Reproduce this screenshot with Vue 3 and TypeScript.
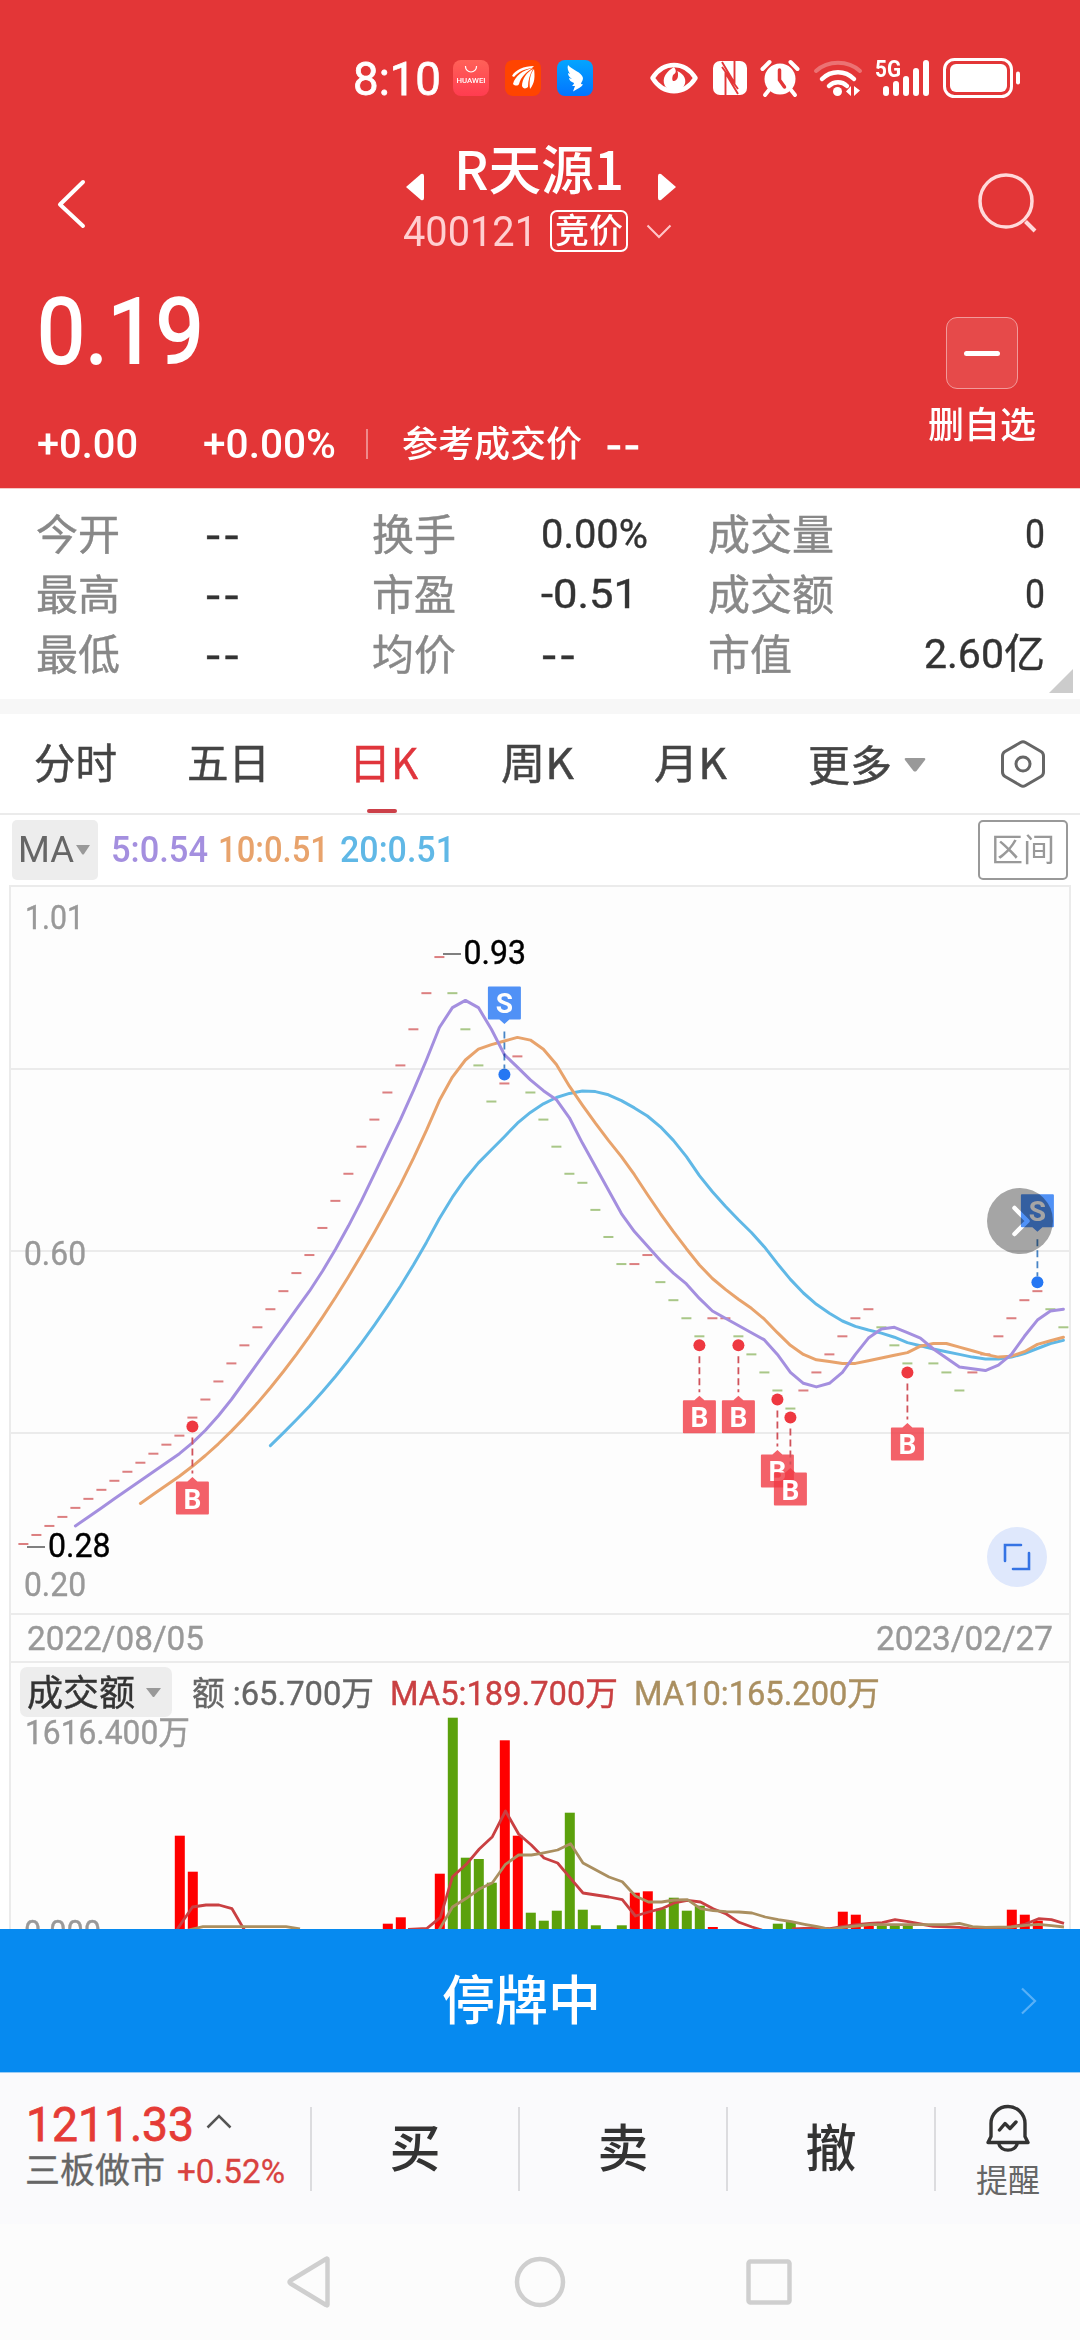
<script setup lang="ts">
import type { Directive } from 'vue'

// Condenses or widens a run of text horizontally so it occupies the given width.
const vFit: Directive<HTMLElement, number> = {
  mounted(el, binding) {
    const natural = el.getBoundingClientRect().width
    if (!natural) return
    el.style.transform = `scaleX(${binding.value / natural})`
    el.style.marginRight = `${binding.value - natural}px`
  },
}

interface Stat { label: string; value: string; width: number }

const stats: Stat[][] = [
  [
    { label: '今开', value: '--', width: 37 },
    { label: '换手', value: '0.00%', width: 107 },
    { label: '成交量', value: '0', width: 20 },
  ],
  [
    { label: '最高', value: '--', width: 37 },
    { label: '市盈', value: '-0.51', width: 97 },
    { label: '成交额', value: '0', width: 20 },
  ],
  [
    { label: '最低', value: '--', width: 37 },
    { label: '均价', value: '--', width: 37 },
    { label: '市值', value: '2.60亿', width: 121 },
  ],
]

const tabs = [
  { label: '分时', w: 83 },
  { label: '五日', w: 83 },
  { label: '日K', w: 69, active: true },
  { label: '周K', w: 73 },
  { label: '月K', w: 73 },
]

const closes = [
  28, 29, 30, 31, 32, 33, 34, 35, 36, 37, 38, 39, 40, 42, 44, 46, 48, 50, 52, 54,
  56, 58, 60, 63, 66, 69, 72, 75, 78, 81, 85, 89, 93, 89, 85, 81, 77, 79, 82, 78,
  75, 72, 69, 68, 65, 62, 59, 59, 60, 57, 55, 53, 51, 53, 53, 51, 49, 47, 45, 43,
  45, 47, 49, 51, 53, 54, 52, 50, 48, 50, 48, 47, 45, 47, 49, 51, 53, 55, 56, 54, 52,
]

const xAt = (i: number) => 23.4 + i * 13
const yAt = (cents: number) => 1544 - (cents - 28) * 9.03

const candles = closes.map((c, i) => ({
  x: xAt(i) - 5,
  y: yAt(c) - 1,
  up: i === 0 || c > closes[i - 1] || i === 47 || i === 54,
}))

function average(period: number): string {
  const points: string[] = []
  for (let i = period - 1; i < closes.length; i++) {
    let sum = 0
    for (let j = i - period + 1; j <= i; j++) sum += closes[j]
    points.push(`${xAt(i).toFixed(1)},${yAt(sum / period).toFixed(1)}`)
  }
  return points.join(' ')
}

const averages = [
  { color: '#60b8e6', points: average(20) },
  { color: '#e8a36c', points: average(10) },
  { color: '#a48fdf', points: average(5) },
]

const buys = [13, 52, 55, 58, 59, 68].map((i) => ({ x: xAt(i), y: yAt(closes[i]) }))
const sells = [37, 78].map((i) => ({ x: xAt(i), y: yAt(closes[i]) }))

// [index, top, rising]
const volumes: [number, number, number][] = [
  [12, 1835.7, 1], [13, 1871.7, 1], [28, 1923.7, 1], [29, 1917.3, 1], [32, 1873.7, 1],
  [33, 1717.7, 0], [34, 1857.7, 0], [35, 1859, 0], [36, 1882.7, 0], [37, 1740.3, 1],
  [38, 1835.7, 1], [39, 1912.7, 0], [40, 1920.7, 0], [41, 1910.7, 0], [42, 1812.7, 0],
  [43, 1909.7, 0], [44, 1925.3, 0], [46, 1925.3, 0], [47, 1892.7, 1], [48, 1891.3, 1],
  [49, 1908.7, 0], [50, 1897.7, 0], [51, 1910.7, 0], [52, 1905.7, 0], [53, 1927, 1],
  [58, 1923.7, 0], [59, 1921.7, 0], [63, 1911.7, 1], [64, 1914.7, 1], [65, 1926, 1],
  [66, 1924.7, 0], [67, 1926, 0], [68, 1926, 0], [76, 1909.7, 1], [77, 1914.7, 1], [78, 1920.7, 1],
]

const volumeMa5 = [
  '176,1931 192.5,1907 206,1905 219,1905 232,1908.7 245,1931',
  '408,1929.5 427,1928.3 440.4,1917.3 452.5,1876.7 466.3,1864.3 479.3,1849 492.4,1836.7 505.5,1811 518.6,1834 531.3,1845 544,1858 557.6,1863 570.6,1878.3 583,1893 596,1895 609,1897 622.3,1899.7 635.4,1916 648.5,1912 661.6,1908.7 674.3,1903 687.4,1900.3 700.5,1902 713.2,1908.7 726.3,1914 739,1922.3 752,1927 762,1930',
  '792,1929 816,1928 830,1928.6 843.4,1926.3 856.5,1924.7 869.5,1923.3 882.3,1922.7 895,1919.7 908,1921.7 920.5,1924 933.3,1926.3 959.4,1927.3 971,1929 998,1928.6 1011.4,1926.7 1025.5,1924 1038.6,1918.7 1051.4,1919.7 1064,1923.3',
]
const volumeMa10 = [
  '188,1930 203,1926.7 286,1926.7 300,1929',
  '439,1930 452.5,1907 466.3,1898.3 479.3,1889 492.4,1882.7 505.5,1864.3 518.6,1855 531.3,1855 540,1853.6 557.6,1850 570.6,1843.7 583,1863 596,1870 609,1877 622.3,1881.7 635.4,1896 648.5,1902 661.6,1902 674.3,1900 687.4,1899.7 700.5,1908.7 713.2,1910.7 726.3,1911.7 739,1912 752,1913 765.2,1917 778.3,1919.7 791.4,1921.7 804.5,1924.3 817.5,1926.7 830,1929.4 843.4,1927.3 856.5,1926 869.5,1924.7 946,1924.7 959.4,1923.3 972.5,1926.7 985.6,1927.3 1011.4,1927 1025.5,1925.3 1038.6,1924.3 1051.4,1925.7 1064,1927',
]

const actions = ['买', '卖', '撤']
</script>

<template>
  <div class="screen">
    <header class="hero">
      <div class="status">
        <span class="clock"><span v-fit="88" class="fit">8:10</span></span>
        <svg class="apps" width="142" height="38" viewBox="452 59 142 38">
          <defs>
            <linearGradient id="gh" x1="0" y1="0" x2="0" y2="1">
              <stop offset="0" stop-color="#ff6158" /><stop offset="1" stop-color="#ff3c50" />
            </linearGradient>
            <linearGradient id="gb" x1="0" y1="0" x2="0" y2="1">
              <stop offset="0" stop-color="#03a5ff" /><stop offset="1" stop-color="#0274ff" />
            </linearGradient>
          </defs>
          <rect x="453" y="60" width="36" height="36" rx="8" fill="url(#gh)" />
          <path d="M465.500 66v.5a5.500 5.500 0 0 0 11 0v-.5" fill="none" stroke="#fff" stroke-width="1.200" />
          <text x="456.500" y="83" font-size="7.500" font-weight="500" fill="#fff" textLength="29" lengthAdjust="spacingAndGlyphs">HUAWEI</text>
          <rect x="505" y="60" width="36" height="36" rx="8" fill="#ff4400" />
          <path d="M512 76c3-6 12-10 22-10l-2 2c-8 1-14 4-18 9zM513 84c2-8 10-14 20-16c-7 4-12 9-14 16c-1 2-4 2-6 0zM522 86c0-7 5-14 11-17c-3 5-5 11-5 18c-2 2-5 2-6-1zM530 89c-1-8 0-15 4-20c1 7 1 14-4 20z" fill="#fff" />
          <rect x="557" y="60" width="36" height="36" rx="8" fill="url(#gb)" />
          <path d="M568 65c4 5 14 7 15 13c0 3-2 4-2 6l2 .5c-2 3-5 4-10 7l2-5.500h-3c1-1 2-2 2-3c-3-1-5-3-5-5l3 1c-3-2-4-4-4-6l2 1c-2-3-3-6-2-9z" fill="#fff" />
        </svg>
        <svg class="sys" width="376" height="44" viewBox="648 56 376 44" fill="none" stroke="#fff">
          <path d="M652.500 78c11-17.500 32-17.500 43 0c-11 17.500-32 17.500-43 0z" stroke-width="4.500" stroke-linejoin="round" />
          <path d="M674 67c3 4 2 6-1 8c-1 3-1 5 0 6c3 0 5-2 5-6c0-2 0-3-1-4c8 3 10 10 7 15c-4 6-15 6-19 0c-4-8 2-15 9-19z" fill="#fff" stroke="none" />
          <rect x="713" y="61" width="34" height="34" rx="7" fill="#fff" stroke="none" />
          <path d="M725.500 95V73L738 94M734.500 61V83L722 62M722 67L738 89" stroke="#e33637" stroke-width="1.900" />
          <circle cx="780" cy="79" r="15.500" fill="#fff" stroke="none" />
          <path d="M762.500 69l7-7M797.500 69l-7-7" stroke-width="4" stroke-linecap="round" />
          <path d="M769 90l-4 5M791 90l4 5" stroke-width="4" stroke-linecap="round" />
          <path d="M779.500 70v10l5 7" stroke="#e33637" stroke-width="3.500" stroke-linecap="round" />
          <path d="M816 71c12-11 32-11 44 0" stroke-width="4" stroke-linecap="round" opacity=".3" />
          <path d="M822 79c9-9 23-9 32 0M829 86c5-5 13-5 18 0" stroke-width="4.500" stroke-linecap="round" />
          <circle cx="837.500" cy="91.500" r="4.500" fill="#fff" stroke="none" />
          <path d="M846 91.500l5-5.500v10M854 86v10l6-5.500z" fill="#fff" stroke="none" />
          <text x="875" y="77" font-size="24" font-weight="700" fill="#fff" stroke="none" textLength="26" lengthAdjust="spacingAndGlyphs">5G</text>
          <path d="M886 89v4M896 84v9M906 79v14M916 71v22M926 63v30" stroke-width="6" stroke-linecap="round" />
          <rect x="944.500" y="59.500" width="67" height="37" rx="10" stroke-width="3" />
          <rect x="950" y="64" width="57" height="28" rx="6" fill="#fff" stroke="none" />
          <path d="M1018 73.500v9" stroke-width="4" stroke-linecap="round" />
        </svg>
      </div>

      <div class="nav">
        <svg class="back" width="32" height="54" viewBox="56 177 32 54"><path d="M83 182L60 204.500L83 226" fill="none" stroke="#fff" stroke-width="4" stroke-linecap="round" stroke-linejoin="round" /></svg>
        <div class="title-block">
          <div class="title-row">
            <svg width="20" height="28" viewBox="0 0 20 28"><path d="M1 14L16 1q3-1 3 2v22q0 3-3 2z" fill="#fff" /></svg>
            <h1><span v-fit="170" class="fit">R天源1</span></h1>
            <svg width="20" height="28" viewBox="0 0 20 28"><path d="M19 14L4 1q-3-1-3 2v22q0 3 3 2z" fill="#fff" /></svg>
          </div>
          <div class="code-row">
            <span class="code"><span v-fit="134" class="fit">400121</span></span>
            <span class="badge">竞价</span>
            <svg width="26" height="15" viewBox="0 0 26 15"><path d="M1.500 1.500L13 13L24.500 1.500" fill="none" stroke="#ffc6c8" stroke-width="2" /></svg>
          </div>
        </div>
        <svg class="search" width="62" height="62" viewBox="975 171 62 62" fill="none" stroke="#ffd9da" stroke-width="3.500">
          <circle cx="1005" cy="201" r="26" /><path d="M1024.500 221.500L1034 231" stroke-width="4" />
        </svg>
      </div>

      <div class="quote">
        <div class="quote-main">
          <div class="price"><span v-fit="167" class="fit">0.19</span></div>
          <div class="change">
            <span v-fit="101" class="fit">+0.00</span>
            <span v-fit="133" class="fit pct">+0.00%</span>
            <i class="rule"></i>
            <span class="ref">参考成交价</span>
            <span v-fit="36" class="fit dash hyphens">--</span>
          </div>
        </div>
        <div class="remove">
          <span class="minus"><i></i></span>
          <span class="remove-label">删自选</span>
        </div>
      </div>
    </header>

    <section class="stats">
      <div v-for="(row, r) in stats" :key="r" class="stat-row">
        <div v-for="s in row" :key="s.label" class="stat">
          <span class="stat-label">{{ s.label }}</span>
          <span class="stat-value"><span v-fit="s.width" class="fit" :class="{ hyphens: s.value === '--' }">{{ s.value }}</span></span>
        </div>
      </div>
      <i class="corner"></i>
    </section>

    <nav class="tabs">
      <span v-for="t in tabs" :key="t.label" class="tab" :class="{ active: t.active }"><span v-fit="t.w" class="fit">{{ t.label }}</span></span>
      <span class="tab more">更多<svg width="22" height="14" viewBox="0 0 22 14"><path d="M2 0h18q2 0 1 2L12.500 13q-1.500 1-3 0L1 2q-1-2 1-2z" fill="#999" /></svg></span>
      <svg class="gear" width="46" height="50" viewBox="0 0 46 50" fill="none" stroke="#666" stroke-width="3">
        <path d="M20.500 3.500q2.500-1.500 5 0l15.500 9q2.500 1.500 2.500 4.500v16q0 3-2.500 4.500l-15.500 9q-2.500 1.500-5 0l-15.500-9q-2.500-1.500-2.500-4.500v-16q0-3 2.500-4.500z" /><circle cx="23" cy="25" r="7" />
      </svg>
    </nav>

    <div class="indicator">
      <span class="chip"><span v-fit="56" class="fit">MA</span><svg width="14" height="10" viewBox="0 0 14 10"><path d="M0 0h14L8 9q-1 1-2 0z" fill="#999" /></svg></span>
      <span v-fit="97" class="fit ma ma5">5:0.54</span>
      <span v-fit="111" class="fit ma ma10">10:0.51</span>
      <span v-fit="115" class="fit ma ma20">20:0.51</span>
      <span class="range">区间</span>
    </div>

    <main class="frame">
      <svg class="kline" width="1058" height="728" viewBox="11 887 1058 728">
        <path d="M11 1069H1069M11 1251H1069M11 1433H1069M11 1614H1069" stroke="#ebebeb" stroke-width="2" />
        <g class="axis" font-size="33">
          <text x="25" y="929" textLength="59" lengthAdjust="spacingAndGlyphs">1.01</text>
          <text x="24" y="1265" textLength="62" lengthAdjust="spacingAndGlyphs">0.60</text>
          <text x="24" y="1596" textLength="62" lengthAdjust="spacingAndGlyphs">0.20</text>
        </g>
        <rect v-for="(c, i) in candles" :key="i" :x="c.x" :y="c.y" width="10" height="2" :fill="c.up ? '#dc7f80' : '#a9c788'" />
        <polyline v-for="a in averages" :key="a.color" :points="a.points" fill="none" :stroke="a.color" stroke-width="3" stroke-linejoin="round" stroke-linecap="round" />
        <path d="M443 954h18M27 1547h18" stroke="#808080" stroke-width="2" />
        <g font-size="33" fill="#000" stroke="#000" stroke-width=".4">
          <text x="463.500" y="964" textLength="62.500" lengthAdjust="spacingAndGlyphs">0.93</text>
          <text x="48" y="1557" textLength="62.500" lengthAdjust="spacingAndGlyphs">0.28</text>
        </g>
        <circle cx="1020" cy="1221" r="33" fill="#000" fill-opacity=".35" />
        <path d="M1014.500 1208l13 13l-13 13" fill="none" stroke="#fff" stroke-width="4.500" stroke-linecap="round" stroke-linejoin="round" />
        <g v-for="b in buys" :key="b.x" :transform="`translate(${b.x} ${b.y})`">
          <circle cy="9" r="6" fill="#ee3840" />
          <path d="M0 20V56" stroke="#d0525a" stroke-width="1.800" stroke-dasharray="7 4" />
          <path d="M-16.500 65q0-1 1-1h10.500L0 59.500L5 64h10.500q1 0 1 1v31q0 1-1 1h-31q-1 0-1-1z" fill="#f03943" fill-opacity=".8" />
          <text y="91" text-anchor="middle" font-size="28" font-weight="700" fill="#fff">B</text>
        </g>
        <g v-for="s in sells" :key="s.x" class="sell" :transform="`translate(${s.x} ${s.y})`">
          <circle cy="-9" r="6" fill="#2578f5" />
          <path d="M0 -52V-15" stroke="#4886c8" stroke-width="1.800" stroke-dasharray="7 4" />
          <path d="M-16.500 -96q0-1 1-1h31q1 0 1 1v31q0 1-1 1h-10.500L0 -59.500L-5 -64h-10.500q-1 0-1-1z" fill="#5092f8" />
          <text y="-70" text-anchor="middle" font-size="28" font-weight="700" fill="#fff">S</text>
        </g>
        <circle cx="1017" cy="1557" r="30" fill="#dfe8fc" />
        <path d="M1005 1561V1545H1021M1029 1553V1569H1013" fill="none" stroke="#3573e4" stroke-width="2.600" stroke-linecap="round" />
      </svg>

      <div class="dates">
        <span v-fit="177" class="fit">2022/08/05</span>
        <span class="end"><span v-fit="177" class="fit">2023/02/27</span></span>
      </div>

      <div class="turnover">
        <span class="vchip">成交额<svg width="15" height="9" viewBox="0 0 15 9"><path d="M0 0h15L8.500 8.500q-1 1-2 0z" fill="#999" /></svg></span>
        <span v-fit="182" class="fit amount">额 :65.700万</span>
        <span v-fit="228" class="fit v5">MA5:189.700万</span>
        <span v-fit="246" class="fit v10">MA10:165.200万</span>
      </div>

      <svg class="volume" width="1058" height="222" viewBox="11 1707 1058 222">
        <g class="axis" font-size="33">
          <text x="25" y="1744" textLength="165" lengthAdjust="spacingAndGlyphs">1616.400万</text>
          <text x="24" y="1944" textLength="77" lengthAdjust="spacingAndGlyphs">0.000</text>
        </g>
        <rect v-for="v in volumes" :key="v[0]" :x="xAt(v[0]) - 4.6" :y="v[1]" width="10" :height="1949 - v[1]" :fill="v[2] ? '#ff0000' : '#5ba10c'" />
        <polyline v-for="p in volumeMa5" :key="p" :points="p" fill="none" stroke="#c94042" stroke-width="2.800" stroke-linejoin="round" />
        <polyline v-for="p in volumeMa10" :key="p" :points="p" fill="none" stroke="#aa8f60" stroke-width="2.800" stroke-linejoin="round" />
      </svg>
    </main>

    <div class="halt">
      <span class="halt-text">停牌中</span>
      <svg width="18" height="28" viewBox="0 0 18 28"><path d="M2 1.500L15 14L2 26.500" fill="none" stroke="#58b0f7" stroke-width="2.200" /></svg>
    </div>

    <footer class="trade">
      <div class="index">
        <div class="index-top">
          <span v-fit="168" class="fit">1211.33</span>
          <svg width="26" height="15" viewBox="0 0 26 15"><path d="M1.500 13.500L13 2L24.500 13.500" fill="none" stroke="#555" stroke-width="2.500" /></svg>
        </div>
        <div class="index-sub"><span class="index-name">三板做市</span><span v-fit="108" class="fit index-pct">+0.52%</span></div>
      </div>
      <div v-for="a in actions" :key="a" class="action">{{ a }}</div>
      <div class="remind">
        <svg width="46" height="50" viewBox="984 2104 46 50" fill="none" stroke="#333" stroke-width="3.400" stroke-linejoin="round" stroke-linecap="round">
          <path d="M987 2142.500l3-6v-13a17 17 0 0 1 34 0v13l3 6zM997.500 2143c2 9.500 17 9.500 19 0" />
          <path d="M998.500 2130l5.500-6.500l5 5l6-6.500" />
        </svg>
        <span>提醒</span>
      </div>
    </footer>

    <div class="system-nav">
      <svg width="1080" height="116" viewBox="0 2224 1080 116" fill="none" stroke="#cfcfcf" stroke-width="4.500" stroke-linejoin="round">
        <path d="M327.500 2259.500V2304.500Q327.500 2306 326 2305L290.500 2283.500Q288.500 2282 290.500 2280.500L326 2259Q327.500 2258 327.500 2259.500z" />
        <circle cx="540" cy="2282" r="23" />
        <rect x="748.500" y="2261.500" width="41" height="41" rx="2" />
      </svg>
    </div>
  </div>
</template>

<style>
body { margin: 0; background: #fcfcfc; }
</style>

<style scoped>
.screen {
  width: 1080px;
  height: 2340px;
  overflow: hidden;
  display: flex;
  flex-direction: column;
  background: #fff;
  font-family: Roboto, "Noto Sans CJK SC", sans-serif;
  color: #333;
}
svg { display: block; flex: none; }
.fit { display: inline-block; white-space: nowrap; transform-origin: 0 50%; flex: none; }
.hyphens { font-family: "Liberation Sans", sans-serif; letter-spacing: 2px; }

.hero { height: 489px; flex: none; background: #e33637; color: #fff; border-bottom: 1px solid #f6c9c6; box-sizing: border-box; }
.status { display: flex; height: 120px; padding-left: 353px; }
.clock { font-size: 47px; font-weight: 400; line-height: 157px; width: 99px; -webkit-text-stroke: .8px #fff; }
.apps { margin-top: 59px; }
.sys { margin: 56px 0 0 54px; }

.nav { display: flex; height: 150px; }
.back { margin: 57px 0 0 56px; }
.title-block { margin-left: 315px; width: 280px; }
.title-row { display: flex; height: 86px; padding-left: 2px; }
.title-row svg { margin-top: 53px; }
h1 { margin: 0; width: 232px; padding-left: 29px; box-sizing: border-box; font-size: 53px; font-weight: 400; line-height: 94px; font-family: "Noto Sans CJK SC", sans-serif; }
h1 .fit { font-weight: 500; }
.code-row { display: flex; height: 50px; align-items: center; }
.code { width: 147px; font-size: 42px; color: #ffcfd1; }
.badge { width: 74px; height: 38px; line-height: 33px; border: 2px solid #fff; border-radius: 7px; text-align: center; font-family: "Noto Sans CJK SC", sans-serif; font-size: 34px; font-weight: 500; }
.code-row svg { margin-left: 18px; }
.search { margin: 51px 0 0 293px; }

.quote { display: flex; justify-content: space-between; height: 217px; }
.quote-main { padding-left: 37px; }
.price { font-size: 91px; line-height: 125px; -webkit-text-stroke: 2px #fff; }
.change { display: flex; align-items: center; height: 90px; margin-top: 4px; font-size: 41px; font-weight: 500; }
.pct { margin-left: 65px; }
.rule { width: 2px; height: 30px; margin-left: 30px; background: #ef8a8b; }
.ref { margin: -6px 0 0 34px; font-family: "Noto Sans CJK SC", sans-serif; font-size: 36px; font-weight: 500; }
.dash { margin-left: 24px; -webkit-text-stroke: 1px #fff; }
.remove { width: 110px; padding: 47px 43px 0 0; display: flex; flex-direction: column; align-items: center; }
.minus { display: flex; align-items: center; justify-content: center; width: 70px; height: 70px; border: 1px solid #f19a9a; border-radius: 11px; background: #e64a4a; }
.minus i { width: 36px; height: 5px; border-radius: 3px; background: #fff; }
.remove-label { margin-top: 8px; font-family: "Noto Sans CJK SC", sans-serif; font-size: 36px; line-height: 50px; font-weight: 500; }

.stats { position: relative; height: 196px; flex: none; padding-top: 14px; border-bottom: 15px solid #f7f7f7; }
.stat-row { display: flex; height: 60px; padding-left: 36px; }
.stat { display: flex; width: 336px; line-height: 63px; }
.stat:last-child { width: 337px; justify-content: space-between; }
.stat-label { width: 169px; font-family: "Noto Sans CJK SC", sans-serif; font-size: 42px; line-height: 57px; color: #888; -webkit-text-stroke: .4px #888; }
.stat:last-child .stat-label { width: auto; }
.stat-value { font-size: 41px; color: #333; -webkit-text-stroke: .4px #333; }
.corner { position: absolute; right: 7px; bottom: 6px; border-left: 24px solid transparent; border-bottom: 24px solid #ccc; }

.tabs { display: flex; height: 99px; flex: none; border-bottom: 2px solid #ebebeb; font-family: "Noto Sans CJK SC", sans-serif; font-size: 42px; line-height: 93px; color: #444; padding-left: 34px; -webkit-text-stroke: .5px; }
.tab { width: 153px; position: relative; box-sizing: border-box; }
.tab.active { width: 161px; padding-left: 9px; color: #e0353c; }
.tab.active::after { content: ""; position: absolute; left: 27px; bottom: 0; width: 30px; height: 4px; background: #cc4049; border-radius: 2px; }
.tab.more { display: flex; align-items: center; width: 150px; line-height: 91px; padding: 0 0 3px 1px; }
.more svg { margin: 5px 0 0 12px; }
.gear { margin: 25px 34px 0 auto; }

.indicator { display: flex; align-items: center; height: 70px; flex: none; padding: 0 12px; font-size: 36px; }
.chip { display: flex; align-items: center; width: 86px; height: 60px; border-radius: 5px; background: #ededed; color: #666; margin-right: 13px; padding-left: 6px; box-sizing: border-box; }
.chip svg { margin-left: 2px; }
.ma { font-weight: 500; }
.ma5 { color: #a48fdf; }
.ma10 { margin-left: 10px; color: #e8a36c; }
.ma20 { margin-left: 11px; color: #60b8e6; }
.range { margin-left: auto; width: 86px; height: 56px; line-height: 51px; text-align: center; border: 2px solid #999; border-radius: 5px; color: #999; font-family: "Noto Sans CJK SC", sans-serif; font-size: 32px; }

.frame { width: 1058px; margin: 0 9px; flex: none; border: 2px solid #ebebeb; border-bottom: 0; background: #fdfdfd; height: 1042px; overflow: hidden; }
.axis { fill: #999; stroke: #999; stroke-width: .4px; }
.sell { mix-blend-mode: multiply; }
.dates { display: flex; justify-content: space-between; height: 46px; line-height: 47px; padding: 0 16px; font-size: 33px; color: #999; border-bottom: 2px solid #ebebeb; -webkit-text-stroke: .4px #999; }
.turnover { display: flex; height: 54px; font-size: 33px; line-height: 61px; padding-left: 9px; -webkit-text-stroke: .4px; }
.vchip { display: flex; align-items: center; width: 152px; height: 50px; margin-top: 4px; border-radius: 7px; background: #ededed; padding-left: 7px; box-sizing: border-box; font-family: "Noto Sans CJK SC", sans-serif; font-size: 36px; line-height: 46px; padding-bottom: 4px; }
.vchip svg { margin: 4px 0 0 11px; }
.amount { margin-left: 20px; color: #666; }
.v5 { margin-left: 16px; color: #c94042; }
.v10 { margin-left: 16px; color: #aa8f60; }
.volume { margin-top: -10px; }

.halt { display: flex; align-items: center; height: 144px; flex: none; background: #068af0; color: #fff; border-bottom: 1px solid #9ccdf5; box-sizing: border-box; padding-left: 442px; }
.halt-text { font-family: "Noto Sans CJK SC", sans-serif; font-size: 53px; font-weight: 500; line-height: 134px; flex: 1; padding-bottom: 8px; }
.halt svg { margin-right: 42px; }

.trade { display: flex; align-items: center; height: 151px; flex: none; background: #fafafc; }
.index { width: 310px; padding-left: 26px; box-sizing: border-box; height: 151px; padding-top: 24px; }
.index-top { display: flex; height: 56px; line-height: 56px; font-size: 48px; color: #e53b36; -webkit-text-stroke: .8px #e53b36; }
.index-top svg { margin: 17px 0 0 12px; }
.index-sub { display: flex; height: 34px; line-height: 36px; font-size: 34px; color: #d9423f; -webkit-text-stroke: .3px; }
.index-name { font-family: "Noto Sans CJK SC", sans-serif; font-size: 35px; line-height: 30px; color: #666; width: 152px; margin-left: -1px; }
.action { width: 206px; height: 84px; border-left: 2px solid #dcdcdf; text-align: center; font-family: "Noto Sans CJK SC", sans-serif; font-size: 51px; font-weight: 500; line-height: 76px; }
.remind { display: flex; flex-direction: column; align-items: center; flex: 1; height: 84px; border-left: 2px solid #dcdcdf; font-family: "Noto Sans CJK SC", sans-serif; font-size: 32px; line-height: 48px; color: #666; }
.remind svg { margin-top: -3px; flex: none; }
.system-nav { height: 116px; background: #fcfcfc; }
</style>
